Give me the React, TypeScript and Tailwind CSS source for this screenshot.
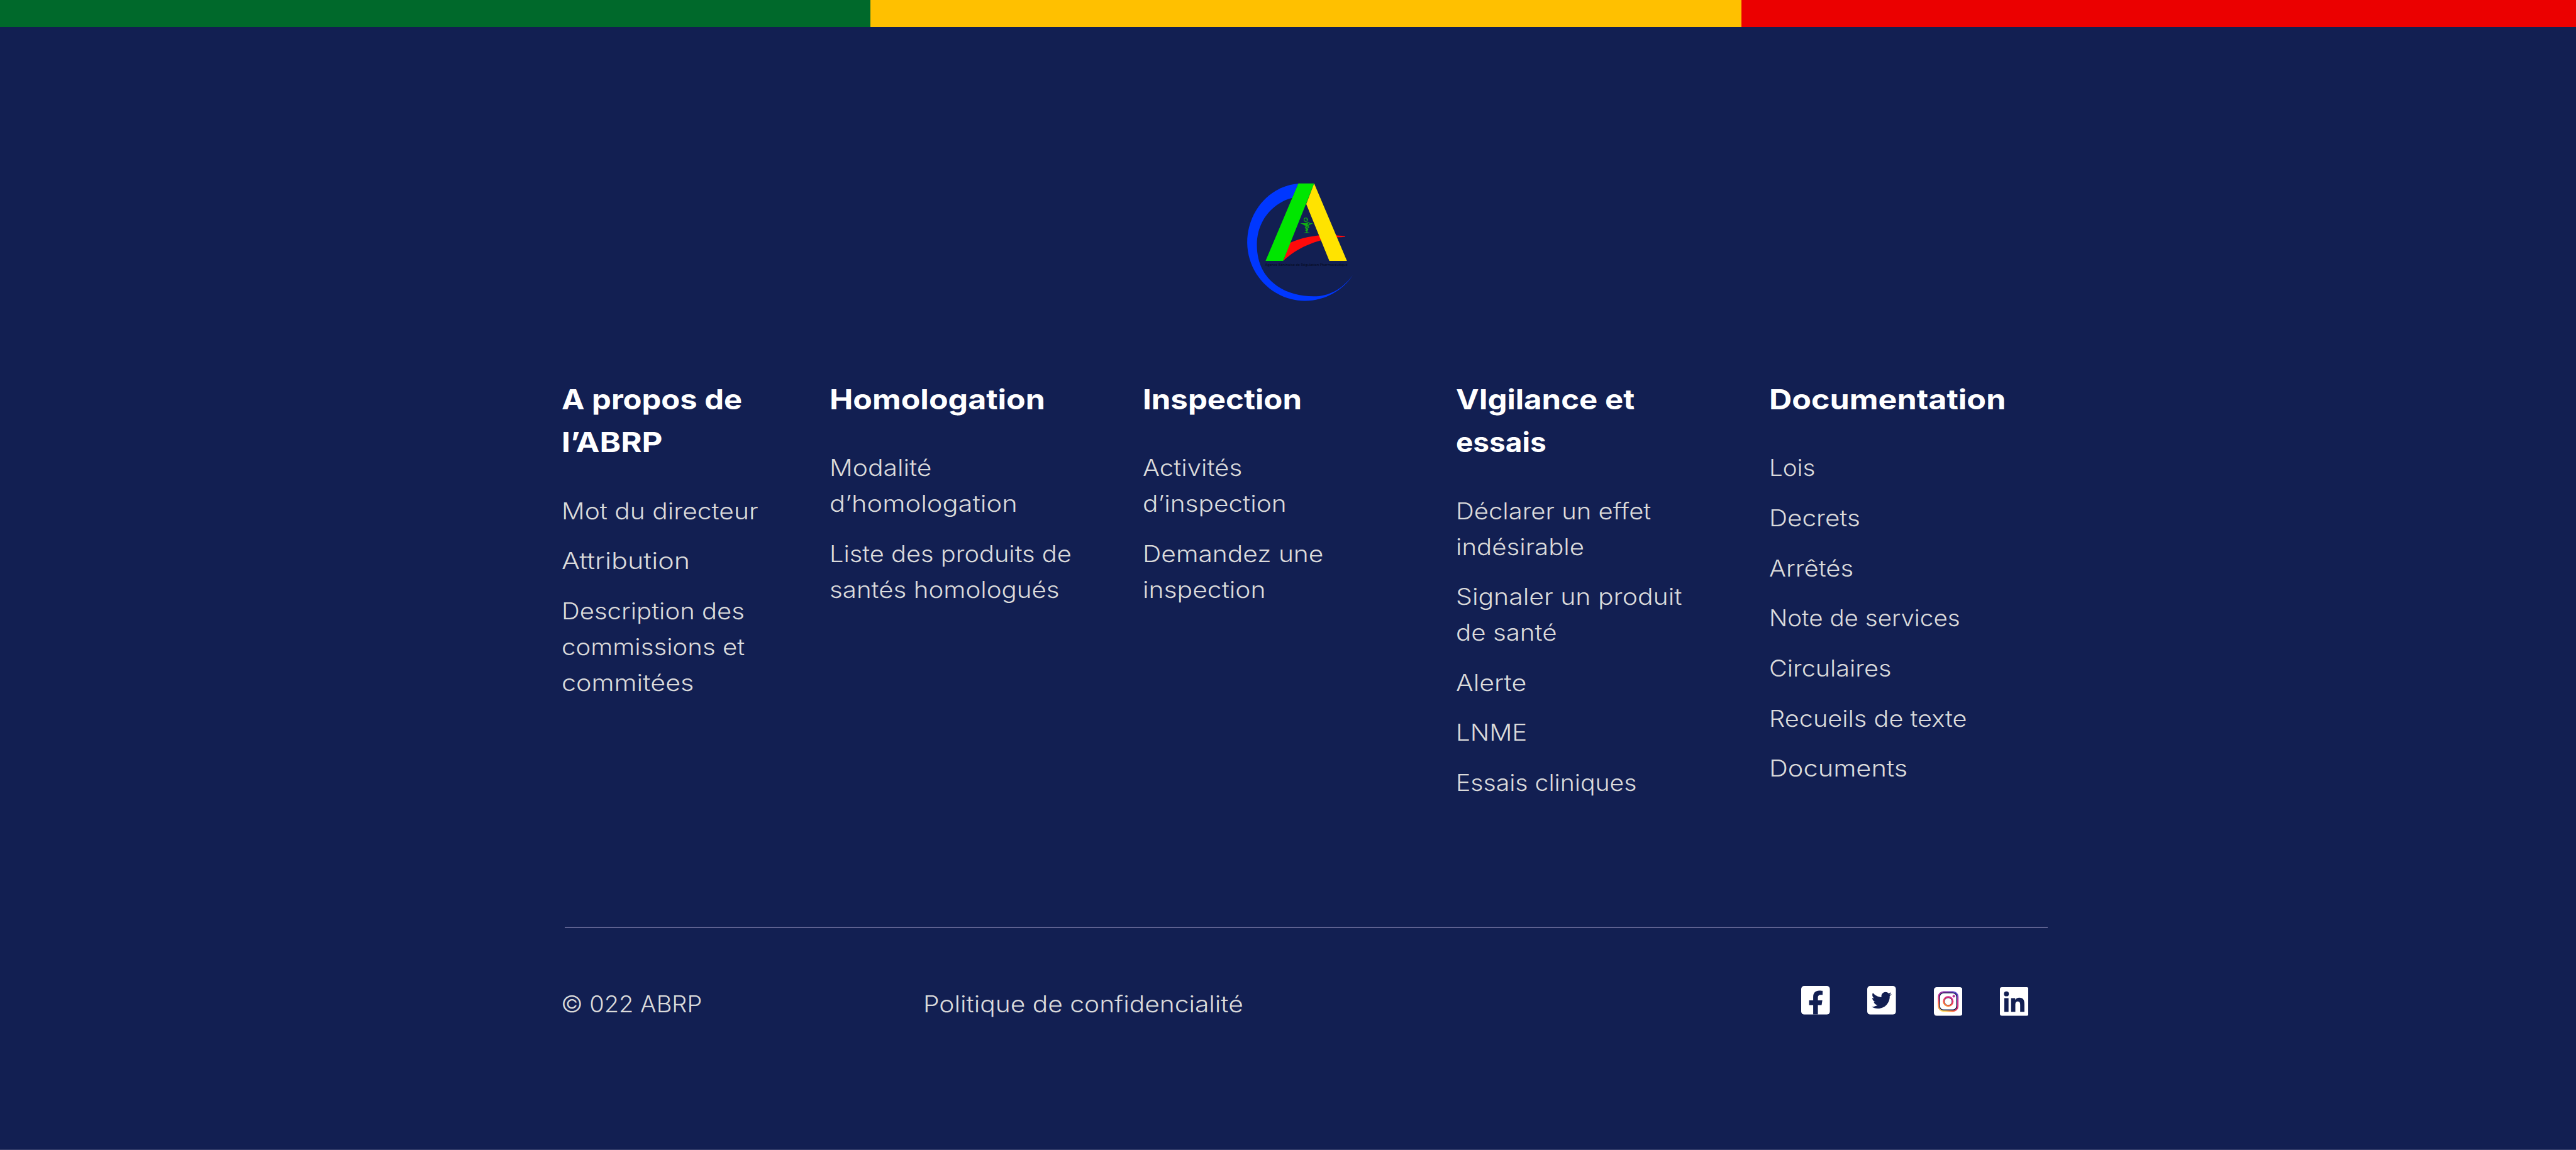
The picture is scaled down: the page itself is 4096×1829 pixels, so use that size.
type Line = { text: string; fit: string };
type Column = { title: Line[]; links: Line[][]; width: string };

const columns: Column[] = [
  {
    width: "w-[426.7px]",
    title: [
      { text: "A propos de", fit: "scale-x-[1.116]" },
      { text: "l’ABRP", fit: "scale-x-[1.161]" },
    ],
    links: [
      [{ text: "Mot du directeur", fit: "scale-x-[1.115]" }],
      [{ text: "Attribution", fit: "scale-x-[1.18]" }],
      [
        { text: "Description des", fit: "scale-x-[1.096]" },
        { text: "commissions et", fit: "scale-x-[1.1]" },
        { text: "commitées", fit: "scale-x-[1.131]" },
      ],
    ],
  },
  {
    width: "w-[497.8px]",
    title: [{ text: "Homologation", fit: "scale-x-[1.142]" }],
    links: [
      [
        { text: "Modalité", fit: "scale-x-[1.118]" },
        { text: "d’homologation", fit: "scale-x-[1.139]" },
      ],
      [
        { text: "Liste des produits de", fit: "scale-x-[1.09]" },
        { text: "santés homologués", fit: "scale-x-[1.103]" },
      ],
    ],
  },
  {
    width: "w-[497.8px]",
    title: [{ text: "Inspection", fit: "scale-x-[1.1215]" }],
    links: [
      [
        { text: "Activités", fit: "scale-x-[1.101]" },
        { text: "d’inspection", fit: "scale-x-[1.111]" },
      ],
      [
        { text: "Demandez une", fit: "scale-x-[1.116]" },
        { text: "inspection", fit: "scale-x-[1.118]" },
      ],
    ],
  },
  {
    width: "w-[497.8px]",
    title: [
      { text: "VIgilance et", fit: "scale-x-[1.121]" },
      { text: "essais", fit: "scale-x-[1.049]" },
    ],
    links: [
      [
        { text: "Déclarer un effet", fit: "scale-x-[1.096]" },
        { text: "indésirable", fit: "scale-x-[1.101]" },
      ],
      [
        { text: "Signaler un produit", fit: "scale-x-[1.122]" },
        { text: "de santé", fit: "scale-x-[1.103]" },
      ],
      [{ text: "Alerte", fit: "scale-x-[1.126]" }],
      [{ text: "LNME", fit: "scale-x-[1.1]" }],
      [{ text: "Essais cliniques", fit: "scale-x-[1.0725]" }],
    ],
  },
  {
    width: "w-[440px]",
    title: [{ text: "Documentation", fit: "scale-x-[1.1455]" }],
    links: [
      [{ text: "Lois", fit: "scale-x-[1.056]" }],
      [{ text: "Decrets", fit: "scale-x-[1.1066]" }],
      [{ text: "Arrêtés", fit: "scale-x-[1.097]" }],
      [{ text: "Note de services", fit: "scale-x-[1.0555]" }],
      [{ text: "Circulaires", fit: "scale-x-[1.085]" }],
      [{ text: "Recueils de texte", fit: "scale-x-[1.088]" }],
      [{ text: "Documents", fit: "scale-x-[1.1375]" }],
    ],
  },
];

function Lines({ lines }: { lines: Line[] }) {
  return (
    <>
      {lines.map((l) => (
        <span key={l.text} className={`block w-max origin-left whitespace-nowrap ${l.fit}`}>
          {l.text}
        </span>
      ))}
    </>
  );
}

function Logo() {
  return (
    <svg viewBox="0 0 960 960" className="size-[227.6px]" role="img" aria-label="ABRP">
      <path
        fill="#0037ff"
        d="M487 89C290 105 144 280 144 485C146 700 320 875 530 875C670 875 790 800 852 702C780 800 690 845 590 845C370 842 209 720 209 500C209 340 310 220 446 185Z"
      />
      <path
        fill="#ff0a0a"
        d="M430 486C520 445 640 425 740 436C770 438 790 441 802 444L801 447C780 447 765 448 748 449C600 465 480 520 386 606Z"
      />
      <path fill="#00e600" d="M487 88H593L385 607H267Z" />
      <path fill="#ffe300" d="M593 88L813 607H695L540 226Z" />
      <g fill="none" stroke="#12b012" strokeLinecap="round">
        <path
          strokeWidth="5.5"
          d="M545 333C551 322 542 318 536 319C524 321 522 334 530 341C539 349 562 343 562 358C562 372 536 370 533 382C532 391 556 388 557 379C557 372 545 372 540 377M534 383C536 396 553 390 551 397C549 402 538 396 536 401C537 406 546 404 550 406"
        />
        <path strokeWidth="4" d="M544 372V416" />
      </g>
      <path
        fill="#12b012"
        d="M498 354H553L547 372H537C522 368 520 360 498 354ZM567 354H588C573 358 566 365 559 369ZM522 419C530 415 538 416 543 411C549 416 558 415 567 419Z"
      />
      <ellipse cx="547" cy="332" rx="4.5" ry="6" fill="#12b012" />
      <text
        x="264"
        y="643"
        textLength="553"
        lengthAdjust="spacingAndGlyphs"
        className="fill-[#040818] font-['Noto_Sans',sans-serif] text-[24px]"
      >
        Agence Béninoise de Régulation Pharmaceutique
      </text>
    </svg>
  );
}

const icon = "block size-[45.6px]";

function Facebook() {
  return (
    <svg viewBox="0 0 64 64" className={icon} aria-label="Facebook">
      <rect width="64" height="64" rx="7" fill="#fff" />
      <path
        fill="#121f52"
        d="M26.8 64V42.7H17.6V32.3H26.8V24.4C26.8 15.4 32.2 10.6 40.2 10.6C44 10.6 47.8 11.2 47.8 11.2V19.9H43.4C39.1 19.9 37.3 22.6 37.3 25.6V32.3H47.2L45.6 42.7H37.3V64Z"
      />
    </svg>
  );
}

function Twitter() {
  return (
    <svg viewBox="0 0 64 64" className={icon} aria-label="Twitter">
      <rect width="64" height="64" rx="7" fill="#fff" />
      <path
        fill="#121f52"
        transform="translate(9.5 9.5) scale(0.0885)"
        d="M459.37 151.716c.325 4.548.325 9.097.325 13.645 0 138.72-105.583 298.558-298.558 298.558-59.452 0-114.68-17.219-161.137-47.106 8.447.974 16.568 1.299 25.34 1.299 49.055 0 94.213-16.568 130.274-44.832-46.132-.975-84.792-31.188-98.112-72.772 6.498.974 12.995 1.624 19.818 1.624 9.421 0 18.843-1.3 27.614-3.573-48.081-9.747-84.143-51.98-84.143-102.985v-1.299c13.969 7.797 30.214 12.67 47.431 13.319-28.264-18.843-46.781-51.005-46.781-87.391 0-19.492 5.197-37.36 14.294-52.954 51.655 63.675 129.3 105.258 216.365 109.807-1.624-7.797-2.599-15.918-2.599-24.04 0-57.828 46.782-104.934 104.934-104.934 30.213 0 57.502 12.67 76.67 33.137 23.715-4.548 46.456-13.32 66.599-25.34-7.798 24.366-24.366 44.833-46.132 57.827 21.117-2.273 41.584-8.122 60.426-16.243-14.292 20.791-32.161 39.308-52.628 54.253z"
      />
    </svg>
  );
}

function Instagram() {
  return (
    <svg viewBox="0 0 64 64" className={icon} aria-label="Instagram">
      <defs>
        <radialGradient id="ig" gradientUnits="userSpaceOnUse" cx="20" cy="58" r="54">
          <stop offset="0" stopColor="#ffdd55" />
          <stop offset="0.12" stopColor="#ffd355" />
          <stop offset="0.45" stopColor="#ff6036" />
          <stop offset="0.62" stopColor="#e0316e" />
          <stop offset="0.78" stopColor="#c42b94" />
          <stop offset="1" stopColor="#5b4bd0" />
        </radialGradient>
      </defs>
      <rect width="64" height="64" rx="6.5" fill="#fff" />
      <rect x="12.2" y="12.2" width="39.2" height="39.2" rx="9.6" fill="none" stroke="#121f52" strokeWidth="2.8" />
      <rect x="10.5" y="10.5" width="43" height="43" rx="11" fill="none" stroke="url(#ig)" strokeWidth="3" />
      <circle cx="32" cy="32" r="8.6" fill="none" stroke="#121f52" strokeWidth="1.6" />
      <circle cx="32" cy="32" r="10.2" fill="none" stroke="url(#ig)" strokeWidth="3.4" />
      <circle cx="44.4" cy="20.2" r="2.9" fill="#b3309c" />
    </svg>
  );
}

function Linkedin() {
  return (
    <svg viewBox="0 0 64 64" className={icon} aria-label="LinkedIn">
      <rect width="64" height="64" rx="4.6" fill="#fff" />
      <g fill="#121f52">
        <circle cx="14.5" cy="15" r="5.5" />
        <path d="M9.8 24.5H19.2V55H9.8ZM24.9 24.5H34V28.6C35.5 25.8 38.8 23.6 43.3 23.6C52.8 23.6 54.7 29.8 54.7 38.2V55H45.2V40.1C45.2 36.5 45 32.1 40 32.1C35.2 32.1 34.4 35.8 34.4 39.8V55H24.9Z" />
      </g>
    </svg>
  );
}

export default function App() {
  return (
    <footer className="flex h-[1829px] w-[4096px] flex-col overflow-hidden border-b border-[#3c4570] bg-[#121f52] font-[Inter,sans-serif] text-[#dbdbdb]">
      <div className="flex h-[43.2px] shrink-0">
        <div className="w-[1384.3px] bg-[#00692b]" />
        <div className="w-[1384.3px] bg-[#ffc000]" />
        <div className="flex-1 bg-[#eb0000]" />
      </div>

      <div className="mt-[227.4px] ml-[1948.8px] h-[227.6px] shrink-0">
        <Logo />
      </div>

      <div className="mt-[103.8px] ml-[892.8px] flex h-[872.4px] shrink-0">
        {columns.map((c) => (
          <section key={c.title[0].text} className={`shrink-0 ${c.width}`}>
            <h3 className="text-[43.8px] leading-[68.27px] font-bold text-white">
              <Lines lines={c.title} />
            </h3>
            <ul className="mt-[46.2px] flex flex-col gap-[22.76px] text-[36.5px] leading-[56.89px] font-light">
              {c.links.map((l) => (
                <li key={l[0].text}>
                  <Lines lines={l} />
                </li>
              ))}
            </ul>
          </section>
        ))}
      </div>

      <div className="ml-[897.6px] h-[2px] w-[2358px] shrink-0 bg-[#5d6190]" />

      <div className="mt-[91.6px] ml-[892.4px] flex items-start text-[36.5px] leading-[56.89px] font-light">
        <div className="w-[575.2px] pt-[1.2px]">
          <Lines lines={[{ text: "© 022 ABRP", fit: "scale-x-[1.04]" }]} />
        </div>
        <div className="w-[1396.6px] pt-[1.2px]">
          <Lines lines={[{ text: "Politique de confidencialité", fit: "scale-x-[1.1155]" }]} />
        </div>
        <div className="flex gap-[59.6px]">
          <Facebook />
          <Twitter />
          <div className="pt-[2px]">
            <Instagram />
          </div>
          <div className="pt-[2px]">
            <Linkedin />
          </div>
        </div>
      </div>
    </footer>
  );
}
